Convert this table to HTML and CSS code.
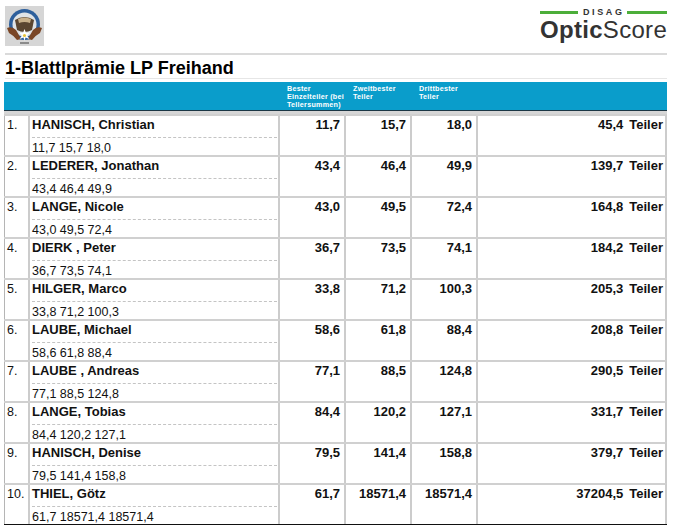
FILE: index.html
```html
<!DOCTYPE html>
<html lang="de">
<head>
<meta charset="utf-8">
<title>1-Blattlprämie LP Freihand</title>
<link rel="stylesheet" href="styles.css">
</head>
<body>
<div class="page">
  <header class="top">
    <div class="crest">
      <svg width="39" height="40" viewBox="0 0 39 40">
        <rect x="0" y="0" width="39" height="40" fill="#d6d6d6"/>
        <circle cx="19.5" cy="18.5" r="15.5" fill="#2d5f9c"/>
        <circle cx="19.5" cy="18.5" r="12" fill="#dfe3e6"/>
        <path d="M10 14 Q19.5 8 29 14 L27 24 Q19.5 28 12 24 Z" fill="#5a4530"/>
        <path d="M13 13 Q19.5 10 26 13 L25 17 Q19.5 15 14 17 Z" fill="#c8b08a"/>
        <path d="M2 22 Q7 20 11 24 Q14 29 16 33 L12 34 Q8 29 4 27 Z" fill="#7a4626"/>
        <path d="M37 22 Q32 20 28 24 Q25 29 23 33 L27 34 Q31 29 35 27 Z" fill="#7a4626"/>
        <path d="M19.5 23 L21 27 L25 26.5 L22 29.5 L24.5 33 L20.5 31.5 L19.5 35 L18.5 31.5 L14.5 33 L17 29.5 L14 26.5 L18 27 Z" fill="#ffffff"/>
        <circle cx="19.5" cy="29.5" r="1.6" fill="#e6c23a"/>
        <rect x="15" y="36" width="9" height="2" fill="#8a8a8a"/>
      </svg>
    </div>
    <div class="brand">
      <div class="disag"><span class="bar bar-left"></span><span class="disag-text">DISAG</span><span class="bar bar-right"></span></div>
      <div class="optic"><span class="optic-bold">Optic</span>Score</div>
    </div>
  </header>
  <div class="rule"></div>
  <h1 class="title">1-Blattlprämie LP Freihand</h1>

  <div class="table">
    <div class="thead">
      <div class="th"></div>
      <div class="th"></div>
      <div class="th">Bester<br>Einzelteiler (bei<br>Tellersummen)</div>
      <div class="th">Zweitbester<br>Teiler</div>
      <div class="th">Drittbester<br>Teiler</div>
      <div class="th"></div>
    </div>
    <div class="spacer"></div>

    <div class="row">
      <div class="cell rank">1.</div>
      <div class="cell who"><div class="name">HANISCH, Christian</div><div class="sub">11,7 15,7 18,0</div></div>
      <div class="cell val">11,7</div>
      <div class="cell val">15,7</div>
      <div class="cell val">18,0</div>
      <div class="cell total"><span>45,4</span><span class="unit">Teiler</span></div>
    </div>
    <div class="row">
      <div class="cell rank">2.</div>
      <div class="cell who"><div class="name">LEDERER, Jonathan</div><div class="sub">43,4 46,4 49,9</div></div>
      <div class="cell val">43,4</div>
      <div class="cell val">46,4</div>
      <div class="cell val">49,9</div>
      <div class="cell total"><span>139,7</span><span class="unit">Teiler</span></div>
    </div>
    <div class="row">
      <div class="cell rank">3.</div>
      <div class="cell who"><div class="name">LANGE, Nicole</div><div class="sub">43,0 49,5 72,4</div></div>
      <div class="cell val">43,0</div>
      <div class="cell val">49,5</div>
      <div class="cell val">72,4</div>
      <div class="cell total"><span>164,8</span><span class="unit">Teiler</span></div>
    </div>
    <div class="row">
      <div class="cell rank">4.</div>
      <div class="cell who"><div class="name">DIERK , Peter</div><div class="sub">36,7 73,5 74,1</div></div>
      <div class="cell val">36,7</div>
      <div class="cell val">73,5</div>
      <div class="cell val">74,1</div>
      <div class="cell total"><span>184,2</span><span class="unit">Teiler</span></div>
    </div>
    <div class="row">
      <div class="cell rank">5.</div>
      <div class="cell who"><div class="name">HILGER, Marco</div><div class="sub">33,8 71,2 100,3</div></div>
      <div class="cell val">33,8</div>
      <div class="cell val">71,2</div>
      <div class="cell val">100,3</div>
      <div class="cell total"><span>205,3</span><span class="unit">Teiler</span></div>
    </div>
    <div class="row">
      <div class="cell rank">6.</div>
      <div class="cell who"><div class="name">LAUBE, Michael</div><div class="sub">58,6 61,8 88,4</div></div>
      <div class="cell val">58,6</div>
      <div class="cell val">61,8</div>
      <div class="cell val">88,4</div>
      <div class="cell total"><span>208,8</span><span class="unit">Teiler</span></div>
    </div>
    <div class="row">
      <div class="cell rank">7.</div>
      <div class="cell who"><div class="name">LAUBE , Andreas</div><div class="sub">77,1 88,5 124,8</div></div>
      <div class="cell val">77,1</div>
      <div class="cell val">88,5</div>
      <div class="cell val">124,8</div>
      <div class="cell total"><span>290,5</span><span class="unit">Teiler</span></div>
    </div>
    <div class="row">
      <div class="cell rank">8.</div>
      <div class="cell who"><div class="name">LANGE, Tobias</div><div class="sub">84,4 120,2 127,1</div></div>
      <div class="cell val">84,4</div>
      <div class="cell val">120,2</div>
      <div class="cell val">127,1</div>
      <div class="cell total"><span>331,7</span><span class="unit">Teiler</span></div>
    </div>
    <div class="row">
      <div class="cell rank">9.</div>
      <div class="cell who"><div class="name">HANISCH, Denise</div><div class="sub">79,5 141,4 158,8</div></div>
      <div class="cell val">79,5</div>
      <div class="cell val">141,4</div>
      <div class="cell val">158,8</div>
      <div class="cell total"><span>379,7</span><span class="unit">Teiler</span></div>
    </div>
    <div class="row last">
      <div class="cell rank">10.</div>
      <div class="cell who"><div class="name">THIEL, Götz</div><div class="sub">61,7 18571,4 18571,4</div></div>
      <div class="cell val">61,7</div>
      <div class="cell val">18571,4</div>
      <div class="cell val">18571,4</div>
      <div class="cell total"><span>37204,5</span><span class="unit">Teiler</span></div>
    </div>
  </div>
</div>
</body>
</html>
```

FILE: styles.css
```css
* { box-sizing: border-box; }
html, body { margin: 0; padding: 0; background: #ffffff; }
body {
  font-family: "Liberation Sans", Arial, sans-serif;
  color: #111;
}
.page {
  width: 663px;
  margin-left: 4px;
}
.top {
  height: 53px;
  display: flex;
  justify-content: space-between;
  align-items: flex-start;
}
.crest {
  margin-top: 6px;
  margin-left: 1px;
  width: 39px;
  height: 40px;
}
.crest svg { display: block; }
.brand {
  margin-top: 7px;
  width: 127px;
  display: flex;
  flex-direction: column;
  align-items: stretch;
}
.disag {
  display: flex;
  align-items: center;
  height: 10px;
}
.bar {
  height: 3px;
  background: #4cae3a;
}
.bar-left { width: 38px; flex: none; margin-right: 5px; }
.bar-right { flex: 1; margin-left: 2px; }
.disag-text {
  font-size: 9px;
  font-weight: bold;
  letter-spacing: 2.6px;
  color: #333;
  line-height: 10px;
}
.optic {
  font-size: 24px;
  line-height: 26px;
  color: #333;
  letter-spacing: 0.3px;
  white-space: nowrap;
}
.optic-bold { font-weight: bold; }
.rule {
  height: 2px;
  background: #dadada;
  margin-left: 1px;
}
.title {
  margin: 3px 0 0 1px;
  height: 21px;
  font-size: 18px;
  line-height: 20px;
  font-weight: bold;
  color: #000;
  border-bottom: 1px solid #e6e6e6;
}
.table {
  margin-top: 3px;
  border-bottom: 1px solid #111;
}
.thead, .row {
  display: grid;
  grid-template-columns: 24px 250px 66px 66px 66px 1fr;
}
.thead {
  height: 29px;
  background: #0a9dcb;
  border-bottom: 1px solid #1b3644;
}
.th {
  color: #ffffff;
  font-size: 7.2px;
  font-weight: bold;
  line-height: 8px;
  padding: 3px 0 0 9px;
  letter-spacing: 0.25px;
  white-space: nowrap;
}
.spacer {
  height: 3px;
  background: #d6d6d6;
}
.row {
  height: 41px;
  border-top: 2px solid #d0d0d0;
  border-right: 2px solid #cccccc;
}
.cell {
  border-left: 2px solid #cccccc;
  font-size: 13px;
  line-height: 16px;
  padding-top: 1px;
}
.rank {
  border-left: 1px solid #b5b5b5;
  font-weight: normal;
  font-size: 12.5px;
  padding-left: 2px;
}
.who { padding-left: 2px; padding-right: 1px; }
.name {
  font-weight: bold;
  padding-bottom: 4px;
  border-bottom: 1px dashed #c4c4c4;
}
.sub {
  font-size: 12.5px;
  line-height: 14px;
  padding-top: 3px;
}
.val {
  font-weight: bold;
  text-align: right;
  padding-right: 4px;
}
.total {
  font-weight: bold;
  display: flex;
  justify-content: flex-end;
  padding-right: 2px;
}
.unit { margin-left: 6px; }
```
